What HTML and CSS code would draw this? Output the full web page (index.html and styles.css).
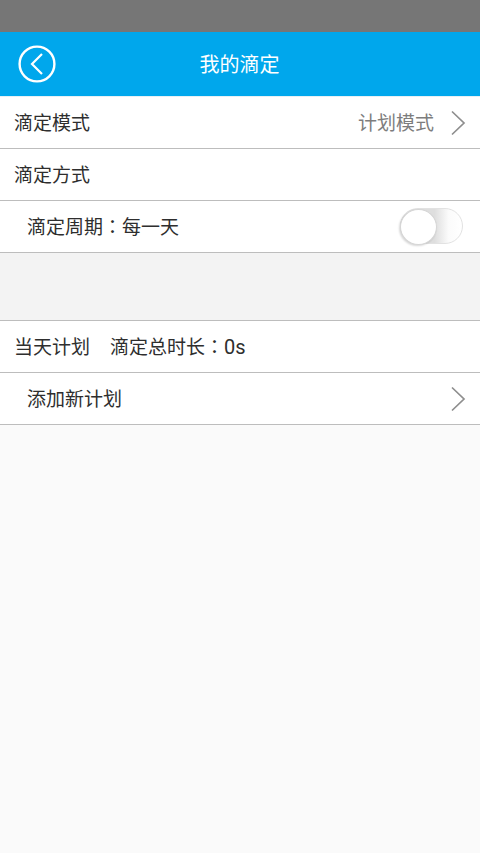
FILE: index.html
```html
<!DOCTYPE html>
<html lang="zh">
<head>
<meta charset="utf-8">
<title>我的滴定</title>
<link rel="stylesheet" href="styles.css">
</head>
<body>
<div class="status"></div>
<header class="bar">
  <svg class="back" width="38" height="38" viewBox="0 0 38 38"><circle cx="19" cy="19" r="17.400" fill="none" stroke="#fff" stroke-width="2.400"/><path d="M24 9 14 19 24 29" fill="none" stroke="#fff" stroke-width="2.200"/></svg>
  <h1 class="title">我的滴定</h1>
</header>
<section class="group first">
  <div class="row"><span>滴定模式</span><span class="value">计划模式</span><svg class="chev" width="16" height="26" viewBox="0 0 16 26"><path d="M2 1.500 14 13 2 24.500" fill="none" stroke="#8e8e8e" stroke-width="1.700"/></svg></div>
  <div class="row"><span>滴定方式</span></div>
  <div class="row sub"><span>滴定周期<span class="colon" lang="zh-Hant">：</span>每一天</span><div class="toggle"><div class="knob"></div></div></div>
</section>
<div class="gap"></div>
<section class="group">
  <div class="row"><span>当天计划</span><span class="total">滴定总时长<span class="colon" lang="zh-Hant">：</span><span class="latin">0s</span></span></div>
  <div class="row sub"><span>添加新计划</span><svg class="chev" width="16" height="26" viewBox="0 0 16 26"><path d="M2 1.500 14 13 2 24.500" fill="none" stroke="#8e8e8e" stroke-width="1.700"/></svg></div>
</section>
</body>
</html>
```
FILE: styles.css
```css
html, body { margin: 0; padding: 0; }
body {
  width: 480px;
  height: 853px;
  overflow: hidden;
  background: #fafafa;
  font-family: "Roboto", "Noto Sans CJK SC", sans-serif;
  color: #2e2e2e;
}
.status { height: 32px; background: #767676; }
.bar {
  height: 64px;
  background: #00a7ec;
  display: flex;
  align-items: center;
  justify-content: center;
  position: relative;
}
.back { position: absolute; left: 18px; top: 13px; }
.title { margin: 2px 0 0 -1px; font-size: 20px; font-weight: 400; color: #fff; line-height: 1; }
.group { background: #fff; }
.group.first { border-top: 1px solid #e6f0f5; }
.row {
  height: 49px;
  padding: 2px 14px 0;
  border-bottom: 1px solid #bdbdbd;
  display: flex;
  align-items: center;
  font-size: 19px;
  line-height: 1;
}
.row.sub { padding-left: 27px; }
.colon { font-family: "Noto Sans CJK TC", sans-serif; line-height: 0; }
.latin { font-size: 20px; line-height: 0; }
.value { margin-left: auto; color: #7d7d7d; margin-right: 16px; }
.sub .chev { margin-left: auto; }
.chev { margin-top: -1px; flex: none; }
.total { margin-left: 20px; }
.toggle {
  margin-left: auto;
  margin-top: -4px;
  margin-right: 3px;
  width: 61px;
  height: 34px;
  border: 1px solid #e2e2e2;
  border-radius: 18px;
  background: linear-gradient(90deg, #dedede 55%, #fbfbfb 78%, #fff);
  position: relative;
}
.knob {
  position: absolute;
  left: -1px;
  top: 0;
  width: 37px;
  height: 36px;
  box-sizing: border-box;
  border-radius: 50%;
  background: #fff;
  border: 1px solid #d6d6d6;
  box-shadow: -1px 1px 2px rgba(0,0,0,.16);
}
.gap { height: 67px; background: #f3f3f3; border-bottom: 1px solid #bdbdbd; }
```
